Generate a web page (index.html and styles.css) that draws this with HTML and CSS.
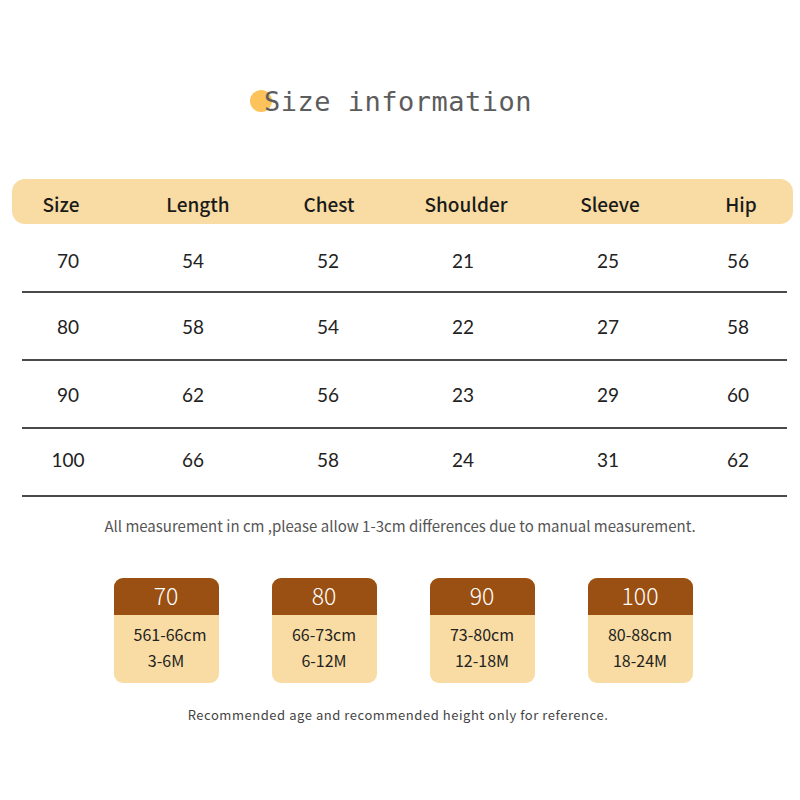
FILE: index.html
```html
<!DOCTYPE html>
<html>
<head>
<meta charset="utf-8">
<link rel="stylesheet" href="styles.css">
</head>
<body>
<div class="page">
  <div class="title">
    <span class="dot"></span>
    <span class="title-text">Size information</span>
  </div>

  <div class="head">
    <div>Size</div><div>Length</div><div>Chest</div><div>Shoulder</div><div>Sleeve</div><div>Hip</div>
  </div>

  <div class="rows">
    <div class="row"><div>70</div><div>54</div><div>52</div><div>21</div><div>25</div><div>56</div></div>
    <div class="row"><div>80</div><div>58</div><div>54</div><div>22</div><div>27</div><div>58</div></div>
    <div class="row"><div>90</div><div>62</div><div>56</div><div>23</div><div>29</div><div>60</div></div>
    <div class="row"><div>100</div><div>66</div><div>58</div><div>24</div><div>31</div><div>62</div></div>
  </div>

  <p class="note">All measurement in cm ,please allow 1-3cm differences due to manual measurement.</p>

  <div class="cards">
    <div class="card"><div class="card-top">70</div><div class="card-body"><span class="shift">561-66cm</span><span>3-6M</span></div></div>
    <div class="card"><div class="card-top">80</div><div class="card-body"><span>66-73cm</span><span>6-12M</span></div></div>
    <div class="card"><div class="card-top">90</div><div class="card-body"><span>73-80cm</span><span>12-18M</span></div></div>
    <div class="card"><div class="card-top">100</div><div class="card-body"><span>80-88cm</span><span>18-24M</span></div></div>
  </div>

  <p class="foot">Recommended age and recommended height only for reference.</p>
</div>
</body>
</html>
```

FILE: styles.css
```css
html, body {
  margin: 0;
  padding: 0;
  background: #ffffff;
}

.page {
  width: 800px;
  height: 800px;
  overflow: hidden;
  font-family: "Noto Sans CJK SC", "Noto Sans", sans-serif;
  color: #1e1e1e;
}

.title {
  display: flex;
  align-items: center;
  justify-content: center;
  padding-top: 84px;
  height: 34px;
  padding-right: 18px;
}

.dot {
  width: 22px;
  height: 22px;
  border-radius: 50%;
  background: #fbc35a;
  margin-right: -8px;
}

.title-text {
  font-family: "DejaVu Sans Mono", monospace;
  font-size: 27px;
  color: #5c5c5c;
  letter-spacing: 0.5px;
  position: relative;
}

.head {
  margin: 61px 7px 0 12px;
  height: 45px;
  background: #f9dca3;
  border-radius: 13px;
  display: grid;
  grid-template-columns: 98px 176px 86px 188px 100px 162px;
  align-items: center;
  font-size: 19px;
  font-weight: 500;
  color: #1a1a1a;
}

.head div {
  text-align: center;
  white-space: nowrap;
  padding-top: 4px;
}

.rows {
  margin: 0 13px 0 22px;
}

.row {
  display: grid;
  grid-template-columns: 92px 158px 112px 158px 132px 128px;
  align-items: center;
  height: 66px;
  border-bottom: 2px solid #4a4a4a;
  font-family: "Lato", "Noto Sans", sans-serif;
  font-size: 19px;
  color: #222;
  box-sizing: content-box;
}

.row:first-child {
  height: 61px;
  padding-top: 6px;
}

.row:last-child {
  height: 61px;
  padding-bottom: 5px;
}

.row div {
  text-align: center;
  white-space: nowrap;
}

.note {
  margin: 17px 0 0 0;
  text-align: center;
  font-size: 15px;
  color: #555;
  font-weight: 400;
  letter-spacing: 0;
  line-height: 24px;
}

.cards {
  display: flex;
  justify-content: center;
  gap: 53px;
  margin-top: 40px;
  padding-left: 6px;
}

.card {
  width: 105px;
  height: 105px;
  border-radius: 9px;
  overflow: hidden;
  background: #f9dca3;
  display: flex;
  flex-direction: column;
}

.card-top {
  height: 37px;
  background: #9a5012;
  color: #fff;
  font-size: 23px;
  font-weight: 300;
  display: flex;
  align-items: center;
  justify-content: center;
  line-height: 1;
  padding-bottom: 3px;
  box-sizing: border-box;
}

.card-body {
  flex: 1;
  display: flex;
  flex-direction: column;
  align-items: center;
  padding-top: 6px;
  font-size: 16px;
  line-height: 26px;
  color: #222;
}

.shift {
  padding-left: 8px;
}

.foot {
  margin: 22px 0 0 0;
  text-align: center;
  font-size: 13px;
  color: #444;
  letter-spacing: 0.55px;
  line-height: 20px;
  padding-right: 4px;
}
```
